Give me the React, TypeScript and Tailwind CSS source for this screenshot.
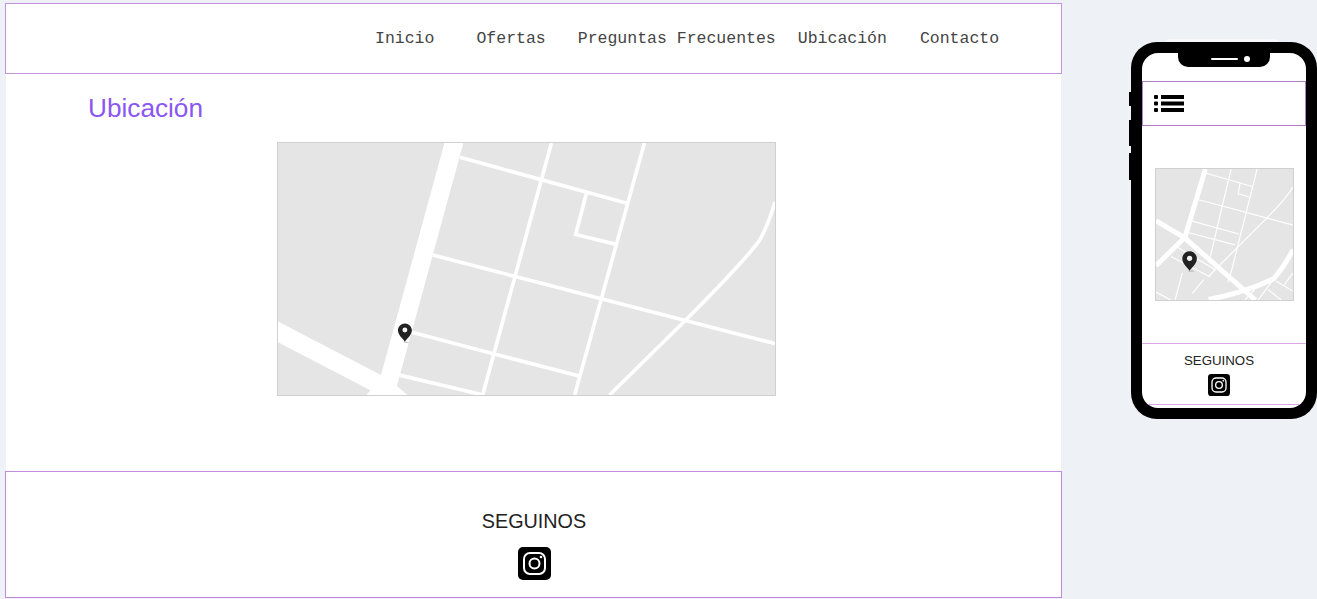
const NAV_ITEMS = [
  { label: "Inicio", className: "ml-[369px]" },
  { label: "Ofertas", className: "ml-[42px]" },
  { label: "Preguntas Frecuentes", className: "ml-[32px]" },
  { label: "Ubicación", className: "ml-[22px]" },
  { label: "Contacto", className: "ml-[33px]" },
];

function Pin({ x, y, scale }: { x: number; y: number; scale: number }) {
  return (
    <g transform={`translate(${x} ${y}) scale(${scale})`}>
      <ellipse cx="5" cy="29" rx="10" ry="1.5" fill="#b5b5b5" />
      <path
        d="M0 28 C-4 20 -21 8 -21 -7 C-21 -19 -11 -28 0 -28 C11 -28 21 -19 21 -7 C21 8 4 20 0 28 Z"
        fill="#222222"
      />
      <circle cx="0" cy="-8" r="7.5" fill="#f2f2f2" />
    </g>
  );
}

function DesktopMap() {
  return (
    <svg viewBox="22 22 1496 760" className="block h-full w-full" preserveAspectRatio="none">
      <rect x="22" y="22" width="1496" height="760" fill="#e5e5e5" />
      <g fill="#ffffff">
        <polygon points="523,22 580,22 380,755 412,782 288,782 300,768 22,623 22,560 332,722" />
      </g>
      <g stroke="#ffffff" strokeWidth="11" fill="none">
        <path d="M570 65 L1072 204" />
        <path d="M845 22 L638 782" />
        <path d="M1125 22 L915 782" />
        <path d="M950 175 L918 298 L1037 327" />
        <path d="M488 360 L1518 627" />
        <path d="M425 593 L928 725" />
        <path d="M388 722 L640 782" />
        <path d="M1020 782 L1250 555 Q1420 385 1472 315 Q1495 275 1518 200" />
      </g>
      <Pin x={404} y={594} scale={1} />
    </svg>
  );
}

function MobileMap() {
  return (
    <svg viewBox="30 25 416 397" className="block h-full w-full" preserveAspectRatio="none">
      <rect x="30" y="25" width="416" height="397" fill="#e5e5e5" />
      <g stroke="#ffffff" fill="none">
        <g strokeWidth="15">
          <path d="M180 25 L118 232" />
          <path d="M30 182 L115 232 L332 422" />
          <path d="M30 318 L115 235" />
          <path d="M190 420 Q300 400 388 357 Q420 320 446 270" />
        </g>
        <g strokeWidth="3.5">
          <path d="M183 38 L322 78" />
          <path d="M258 25 L195 290" />
          <path d="M337 25 L255 350 L248 368" />
          <path d="M285 68 L280 100 L312 110" />
          <path d="M160 118 L446 195" />
          <path d="M140 183 L282 222" />
          <path d="M130 218 L270 255" />
          <path d="M190 350 L370 170 Q425 115 446 80" />
          <path d="M95 262 L210 330" />
          <path d="M75 290 L195 352" />
          <path d="M110 340 L88 422" />
          <path d="M175 360 L140 402" />
          <path d="M30 398 L75 422" />
          <path d="M370 390 L410 422" />
          <path d="M395 365 L446 395" />
          <path d="M340 422 L390 355" />
          <path d="M300 422 L330 390" />
          <path d="M446 340 L420 375" />
        </g>
      </g>
      <Pin x={132} y={304} scale={1.05} />
    </svg>
  );
}

function InstagramIcon({ className }: { className: string }) {
  return (
    <svg viewBox="0 0 33 33" className={className}>
      <rect width="33" height="33" rx="5" fill="#000000" />
      <rect x="6" y="6" width="21" height="21" rx="6" fill="none" stroke="#ffffff" strokeWidth="2" />
      <circle cx="16.5" cy="16.5" r="5" fill="none" stroke="#ffffff" strokeWidth="2" />
      <circle cx="23" cy="10" r="1.3" fill="#ffffff" />
    </svg>
  );
}

function ListIcon() {
  return (
    <svg viewBox="0 0 30 17" className="h-[17px] w-[30px]">
      <rect x="0" y="0" width="4" height="4" rx="1" fill="#000000" />
      <rect x="0" y="6.5" width="4" height="4" rx="1" fill="#000000" />
      <rect x="0" y="13" width="4" height="4" rx="1" fill="#000000" />
      <rect x="7" y="0" width="23" height="4" fill="#000000" />
      <rect x="7" y="6.5" width="23" height="4" fill="#000000" />
      <rect x="7" y="13" width="23" height="4" fill="#000000" />
    </svg>
  );
}

function Phone() {
  return (
    <div className="relative mt-[42px] ml-[69px] h-[377px] w-[186px] rounded-[26px] bg-black p-[11px]">
      {/* highlight above the top edge */}
      <div className="absolute top-[-3px] left-[35px] h-[3px] w-[112px] rounded-t-full bg-[#f8f8fa]" />

      {/* side buttons */}
      <div className="absolute top-[50px] left-[-2px] h-[14px] w-[3px] bg-black" />
      <div className="absolute top-[78px] left-[-2px] h-[26px] w-[3px] bg-black" />
      <div className="absolute top-[111px] left-[-2px] h-[27px] w-[3px] bg-black" />

      {/* notch */}
      <div className="absolute top-[11px] left-[47px] flex h-[14px] w-[92px] items-center justify-center gap-[6px] rounded-b-[10px] bg-black pb-[3px] pl-[12px]">
        <div className="h-[2px] w-[27px] rounded-full bg-white" />
        <div className="h-[6px] w-[6px] rounded-full bg-white" />
      </div>

      <div className="flex h-full w-full flex-col overflow-hidden rounded-[16px] bg-white">
        <div className="mt-[28px] flex h-[45px] shrink-0 items-center border border-[#b07fd0] pl-[11px]">
          <ListIcon />
        </div>
        <div className="mt-[42px] ml-[13px] h-[133px] w-[139px] shrink-0 border border-[#d0d0d0]">
          <MobileMap />
        </div>
        <div className="mt-[42px] flex h-[62px] shrink-0 flex-col items-center border-y border-[#d9a6e6] pt-[9px] pr-[10px]">
          <p className="font-['Liberation_Sans',sans-serif] text-[13.3px] leading-[16px] text-[#222222]">SEGUINOS</p>
          <InstagramIcon className="mt-[5px] h-[22px] w-[22px]" />
        </div>
      </div>
    </div>
  );
}

export default function App() {
  return (
    <div className="flex h-[599px] w-[1317px] overflow-hidden bg-[#eef1f6]">
      <div className="mt-[3px] ml-[5px] flex h-[595px] w-[1057px] shrink-0 flex-col">
        <header className="flex h-[71px] shrink-0 items-start border border-[#c592e0] bg-white pt-[25px]">
          {NAV_ITEMS.map((item) => (
            <a
              key={item.label}
              className={`font-['Liberation_Mono',monospace] text-[16.5px] leading-[20px] text-[#444444] ${item.className}`}
            >
              {item.label}
            </a>
          ))}
        </header>

        <main className="mx-[1px] flex-1 bg-white">
          <h1 className="mt-[18px] ml-[82px] font-['Liberation_Sans',sans-serif] text-[26.2px] leading-[32px] text-[#8b57f2]">
            Ubicación
          </h1>
          <div className="mt-[18px] ml-[271px] h-[254px] w-[499px] border border-[#d0d0d0]">
            <DesktopMap />
          </div>
        </main>

        <footer className="flex h-[127px] shrink-0 flex-col items-center border border-[#bd8cdc] bg-white pt-[38px] pl-[1px]">
          <p className="font-['Liberation_Sans',sans-serif] text-[19.8px] leading-[22px] text-[#222222]">SEGUINOS</p>
          <InstagramIcon className="mt-[15px] h-[33px] w-[33px]" />
        </footer>
      </div>
      <Phone />
    </div>
  );
}
